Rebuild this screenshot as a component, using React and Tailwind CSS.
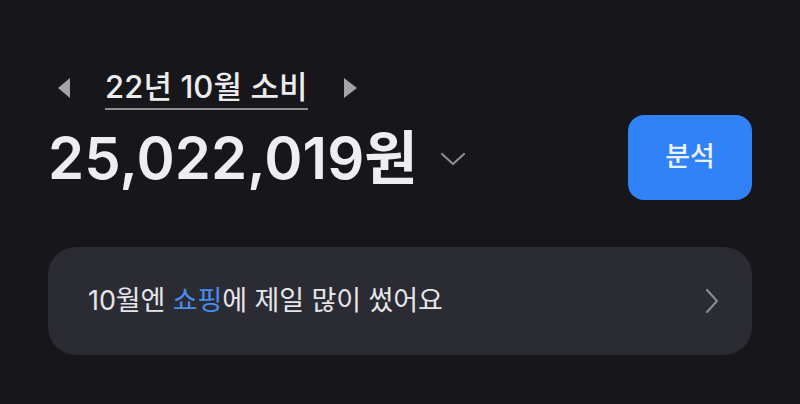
export default function App() {
  const font = { fontFamily: 'Inter, "Noto Sans CJK KR", sans-serif' };
  return (
    <div className="w-[800px] h-[404px] bg-[#17161b] overflow-hidden" style={font}>
      <div className="pl-[48px] pr-[48px] pt-[66px]">
        <div className="flex items-center h-[44px]">
          <svg width="14" height="22" viewBox="0 0 14 22" className="ml-[9px]">
            <polygon points="13,1 13,21 1,11" fill="#a3a3a8" />
          </svg>
          <div className="ml-[34px] border-b-2 border-[#8d8d93] pb-[1px] text-[31px] leading-[40px] font-medium text-[#ececee] tracking-[0.1px]">
            22년 10월 소비
          </div>
          <svg width="16" height="22" viewBox="0 0 16 22" className="ml-[35px]">
            <polygon points="1,1 1,21 14,11" fill="#a3a3a8" />
          </svg>
        </div>
        <div className="flex items-center justify-between mt-[5px]">
          <div className="flex items-center">
            <span className="text-[58px] leading-[62px] font-semibold text-[#eeeef0] tracking-[0.1px]">
              25,022,019원
            </span>
            <svg width="26" height="14" viewBox="0 0 26 14" className="ml-[22px] mt-[2px]">
              <polyline points="2,2 13,12 24,2" fill="none" stroke="#8a8a90" strokeWidth="2.2" strokeLinecap="round" strokeLinejoin="round" />
            </svg>
          </div>
          <div className="w-[124px] h-[85px] rounded-[16px] bg-[#3182f6] flex items-center justify-center text-[27px] font-medium text-[#eaf2ff]">
            분석
          </div>
        </div>
        <div className="mt-[47px] h-[108px] rounded-[28px] bg-[#2b2b33] flex items-center justify-between pl-[40px] pr-[32px]">
          <span className="text-[27px] text-[#e6e6ea] tracking-[-0.1px]">
            10월엔 <span className="text-[#4a8cf0]">쇼핑</span>에 제일 많이 썼어요
          </span>
          <svg width="16" height="28" viewBox="0 0 16 28">
            <polyline points="3,3 13,14 3,25" fill="none" stroke="#8a8a92" strokeWidth="2.2" strokeLinecap="round" strokeLinejoin="round" />
          </svg>
        </div>
      </div>
    </div>
  );
}
